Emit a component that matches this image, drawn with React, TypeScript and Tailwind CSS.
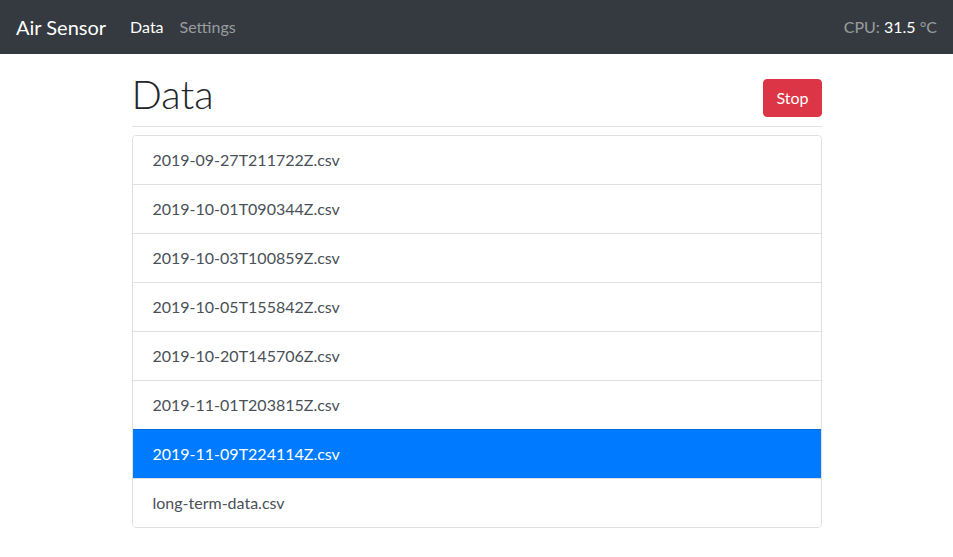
import React, { useState } from "react";

const files = [
  "2019-09-27T211722Z.csv",
  "2019-10-01T090344Z.csv",
  "2019-10-03T100859Z.csv",
  "2019-10-05T155842Z.csv",
  "2019-10-20T145706Z.csv",
  "2019-11-01T203815Z.csv",
  "2019-11-09T224114Z.csv",
  "long-term-data.csv",
];

const App: React.FC = () => {
  const [selected, setSelected] = useState("2019-11-09T224114Z.csv");

  return (
    <div className="min-h-screen bg-white font-['Lato','Noto_Sans',sans-serif] text-[#212529]">
      <nav className="h-[54px] bg-[#343a40] flex items-center px-4">
        <a className="text-[20px] text-white mr-6 leading-[30px]">Air Sensor</a>
        <div className="flex items-center gap-4 text-base">
          <a className="text-white">Data</a>
          <a className="text-white/50">Settings</a>
        </div>
        <div className="ml-auto text-base text-white/50">
          CPU: <span className="text-white">31.5</span> °C
        </div>
      </nav>

      <div className="w-[720px] mx-auto px-[15px]">
        <div className="flex items-center justify-between pt-4 border-b border-[#dee2e6] mb-2">
          <h1 className="text-[40px] font-light leading-[48px] mb-2">Data</h1>
          <button className="bg-[#dc3545] text-white text-base leading-6 px-3 py-[6px] rounded-[4px] border border-[#dc3545]">
            Stop
          </button>
        </div>

        <div className="border border-black/[0.125] rounded-[4px] overflow-hidden">
          {files.map((f, i) => (
            <div
              key={f}
              onClick={() => setSelected(f)}
              className={
                (i > 0 ? "border-t border-black/[0.125] " : "") +
                (f === selected
                  ? "bg-[#007bff] text-white"
                  : "bg-white text-[#495057]") +
                " px-5 py-3 text-base leading-6 cursor-pointer"
              }
            >
              {f}
            </div>
          ))}
        </div>
      </div>
    </div>
  );
};

export default App;
